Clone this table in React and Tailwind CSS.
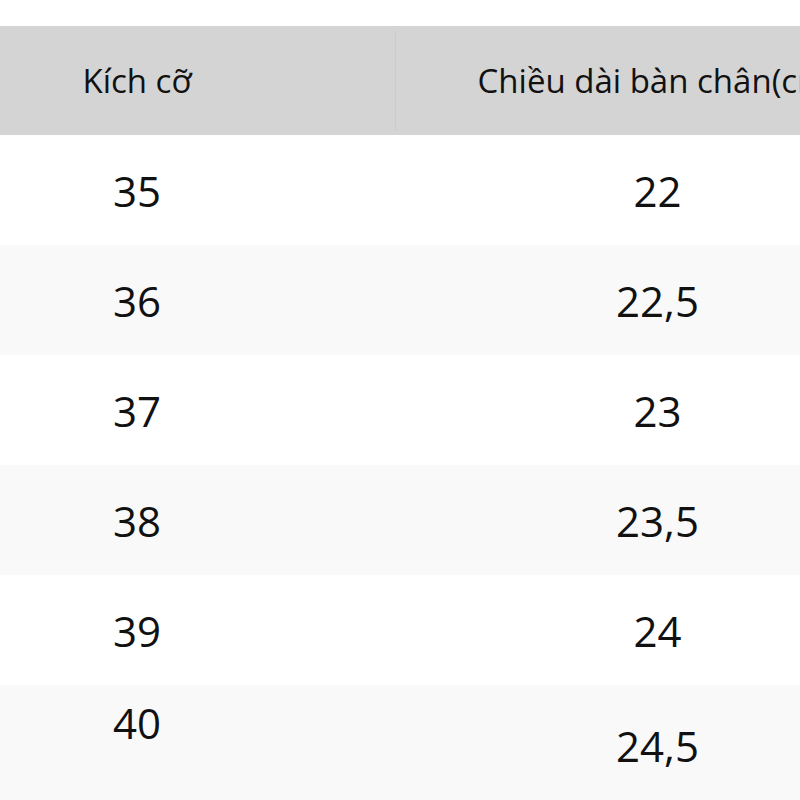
import React from "react";

const rows = [
  ["35", "22", "bg-white"],
  ["36", "22,5", "bg-[#f9f9f9]"],
  ["37", "23", "bg-white"],
  ["38", "23,5", "bg-[#f9f9f9]"],
  ["39", "24", "bg-white"],
];

export default function App() {
  return (
    <div className="w-[800px] h-[800px] overflow-hidden bg-white text-[#111]" style={{ fontFamily: '"Open Sans", "Noto Sans", sans-serif' }}>
      <div className="w-[1040px] ml-[-121px] pt-[26px]">
        <div className="flex h-[109px] bg-[#d4d4d4] text-[33px] items-center">
          <div className="w-[516px] flex justify-center">Kích cỡ</div>
          <div className="w-px h-[100px] bg-[#cbcbcb]" />
          <div className="flex-1 flex justify-center">Chiều dài bàn chân(cm)</div>
        </div>
        {rows.map(([a, b, bg]) => (
          <div key={a} className={`flex h-[110px] items-center text-[42px] ${bg}`}>
            <div className="w-[516px] flex justify-center">{a}</div>
            <div className="w-px" />
            <div className="flex-1 flex justify-center">{b}</div>
          </div>
        ))}
        <div className="flex h-[115px] text-[42px] bg-[#f9f9f9]">
          <div className="w-[516px] flex justify-center pt-[6px]">40</div>
          <div className="w-px" />
          <div className="flex-1 flex justify-center items-center pt-[6px]">24,5</div>
        </div>
      </div>
    </div>
  );
}
